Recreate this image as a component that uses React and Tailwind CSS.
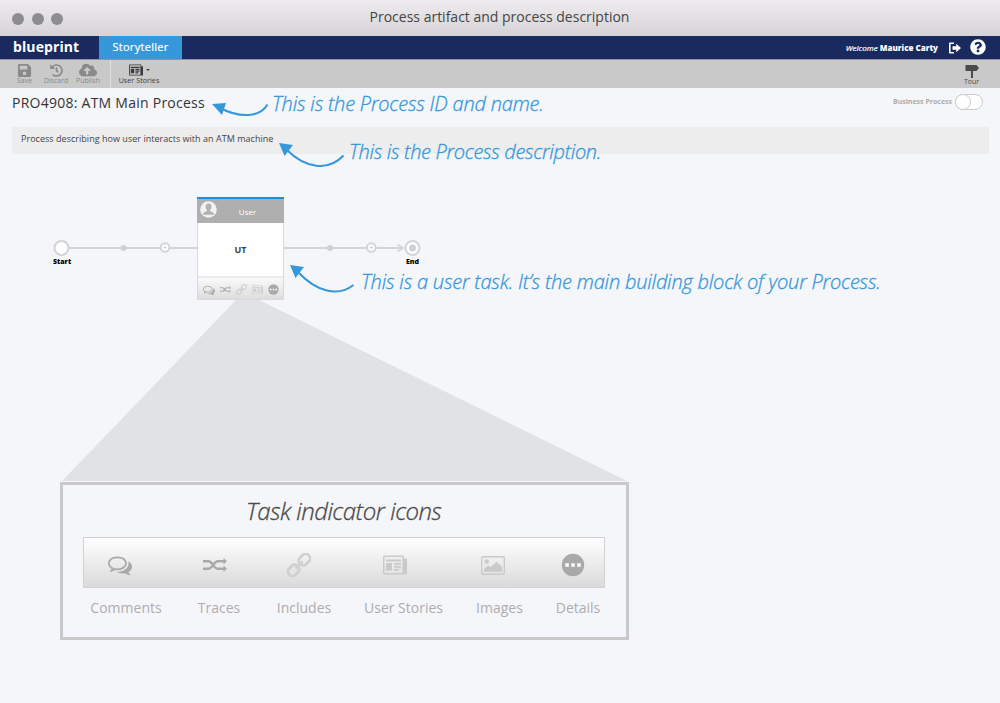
import React from "react";
import { FaSave, FaHistory, FaCloudUploadAlt, FaQuestionCircle } from "react-icons/fa";

const Comments = ({ className }) => (
  <svg className={className} viewBox="0 0 1792 1792" fill="currentColor">
    <path d="M704 384q-153 0-286 52t-211.5 141-78.5 191q0 82 53 158t149 132l97 56-35 84q34-20 62-39l44-31 53 10q78 14 153 14 153 0 286-52t211.5-141 78.5-191-78.5-191-211.5-141-286-52zm0-128q191 0 353.5 68.5t256.5 186.5 94 257-94 257-256.5 186.5-353.5 68.5q-86 0-176-16-124 88-278 128-36 9-86 16h-3q-11 0-20.5-8t-11.5-21q-1-3-1-6.5t.5-6.5 2-6l2.5-5 3.5-5.5 4-5 4.5-5 4-4.5q5-6 23-25t26-29.5 22.5-29 25-38.5 20.5-44q-124-72-195-177t-71-224q0-139 94-257t256.5-186.5 353.5-68.5zm822 1169q10 24 20.5 44t25 38.5 22.5 29 26 29.5 23 25q1 1 4 4.5t4.5 5 4 5 3.5 5.5l2.5 5 2 6 .5 6.5-1 6.5q-3 14-13 22t-22 7q-50-7-86-16-154-40-278-128-90 16-176 16-271 0-472-132 58 4 88 4 161 0 309-45t264-129q125-92 192-212t67-254q0-77-23-152 129 71 204 178t75 230q0 120-71 224.5t-195 176.5z" />
  </svg>
);

const Traces = ({ className }) => (
  <svg className={className} viewBox="0 0 24 24" fill="none" stroke="currentColor" strokeWidth="2.4">
    <path d="M0 8.2h5.500c4 0 5 7.600 9.500 7.600h6M0 15.800h5.500c4 0 5-7.600 9.500-7.600h6" />
    <path d="M20.500 5 24 8.200l-3.500 3.200zM20.500 12.600 24 15.800l-3.500 3.200z" fill="currentColor" stroke="none" />
  </svg>
);

const Includes = ({ className }) => (
  <svg className={className} viewBox="0 0 24 24" fill="none" stroke="currentColor" strokeWidth="2.700">
    <g transform="rotate(-45 12 12)">
      <rect x="-1.500" y="7.600" width="11.500" height="8.800" rx="3.200" />
      <rect x="14" y="7.600" width="11.500" height="8.800" rx="3.200" />
      <path d="M7 12h10" />
    </g>
  </svg>
);

const Stories = ({ className }) => (
  <svg className={className} viewBox="0 0 24 24" fill="currentColor">
    <path fillRule="evenodd" d="M1 2.500h19a1 1 0 0 1 1 1V5.500h2a1 1 0 0 1 1 1V20a1.500 1.500 0 0 1-1.500 1.500H1.500A1.500 1.500 0 0 1 0 20V3.500a1 1 0 0 1 1-1zM1.500 4v16h18V4zM3 6.500h15v2H3zM3 10h6v7.500H3zM11 10h7v1.800h-7zM11 13h7v1.800h-7zM11 16h5v1.800h-5z" />
  </svg>
);

const Images = ({ className }) => (
  <svg className={className} viewBox="0 0 24 24" fill="currentColor">
    <rect x=".7" y="3.700" width="22.600" height="17.600" rx="1" fill="none" stroke="currentColor" strokeWidth="1.400" />
    <circle cx="5.700" cy="8.500" r="2.300" />
    <path d="M3 18.800v-2.700l4-3.700 2.500 1.800 6-5.400 5.500 5v5z" />
  </svg>
);

const Details = ({ className }) => (
  <svg className={className} viewBox="0 0 24 24">
    <circle cx="12" cy="12" r="11.200" fill="currentColor" />
    <path d="M4.300 10.300h3.500v3.500H4.300zM10.300 10.300h3.500v3.500h-3.500zM16.200 10.300h3.500v3.500h-3.500z" fill="#fff" />
  </svg>
);

const SignOut = ({ className }) => (
  <svg className={className} viewBox="0 0 12 12" fill="currentColor">
    <path d="M5 .5v1.500H1.600v8H5v1.500H.8a.8.8 0 0 1-.8-.8V1.300A.8.8 0 0 1 .8.5z" />
    <path d="M3.500 4.300h3.700V1.700L12 6l-4.800 4.300V7.700H3.500z" />
  </svg>
);

const Signpost = ({ className }) => (
  <svg className={className} viewBox="0 0 14 14" fill="currentColor">
    <path d="M.5 1h11L14 4 11.500 7H.5zM6 7h2v7H6z" />
  </svg>
);

function ToolButton({ icon, label, className }) {
  return (
    <div className={"flex flex-col items-center text-[7px] leading-[8px] " + className}>
      <div className="flex h-[14px] items-center">{icon}</div>
      <span className="whitespace-nowrap">{label}</span>
    </div>
  );
}

function Diagram() {
  return (
    <svg className="absolute left-0 top-0 h-[703px] w-[1000px]" viewBox="0 0 1000 703" fill="none">
      <path d="M236 300h23l368 181H62z" fill="#e1e2e6" />
      <g stroke="#d3d4d9" strokeWidth="2">
        <path d="M69 248h332" />
        <circle cx="61.500" cy="248" r="7" fill="#fff" />
        <circle cx="165" cy="247.500" r="4.300" fill="#fff" />
        <circle cx="371.300" cy="247.500" r="4.300" fill="#fff" />
        <path d="M397.500 244.500l5.500 3.500-5.500 3.500" />
        <circle cx="412.500" cy="248" r="7" fill="#fff" />
      </g>
      <g fill="#cfd0d5">
        <circle cx="123.500" cy="248" r="3" />
        <circle cx="330" cy="248" r="3" />
        <circle cx="412.500" cy="248" r="3.500" />
        <path d="M163.500 247h3v1h-3zM164.500 246h1v3h-1zM369.800 247h3v1h-3zM370.800 246h1v3h-1z" />
      </g>
    </svg>
  );
}

function Arrows() {
  return (
    <svg className="pointer-events-none absolute left-0 top-0 h-[703px] w-[1000px]" viewBox="0 0 1000 703" fill="none">
      <g stroke="#3498db" strokeWidth="2">
        <path d="M219 107.500C241 119 260 117 267.500 104.500" />
        <path d="M287 150C305 168 328 172 343.500 155.500" />
        <path d="M299 273C315 290 337 298 353.500 285" />
      </g>
      <g fill="#3498db">
        <path d="M212 104l14-1-4 12z" />
        <path d="M279 143l14 2-8.500 11z" />
        <path d="M290 265l14 2-8.500 11z" />
      </g>
    </svg>
  );
}

function TaskCard() {
  return (
    <div className="absolute left-[197px] top-[197px] flex h-[103px] w-[87px] flex-col border border-t-0 border-[#d9d9db] bg-white">
      <div className="relative -mx-px flex h-[26px] items-center justify-center border-t-2 border-[#1e8fd5] bg-[#afafaf] pl-[14px] pt-[2px] text-[8px] text-white">
        <svg className="absolute left-[3px] top-[1.500px] size-[17px]" viewBox="0 0 17 17">
          <circle cx="8.500" cy="8.500" r="8.300" fill="#f2f2f2" />
          <path d="M8.500 2.500c2 0 3 1.300 3 3.200 0 1.500-.6 2.700-1.500 3.300v1c1.300.6 3.500 1 4 2.800v1H3v-1c.5-1.800 2.700-2.200 4-2.800V9C6.100 8.400 5.500 7.200 5.500 5.700c0-1.900 1-3.200 3-3.200z" fill="#b3b3b3" />
        </svg>
        User
      </div>
      <div className="flex h-[53px] items-center justify-center text-[9px] font-bold text-[#444]">UT</div>
      <div className="flex flex-1 items-center justify-between border-t-2 border-[#ebebed] bg-linear-to-b from-[#fafafa] to-[#dddddd] px-1 pl-[5px] pt-[2px] text-[#a9a9a9]">
        <Comments className="size-[12px]" />
        <Traces className="size-[11px]" />
        <Includes className="size-[11px] text-[#cfcfcf]" />
        <Stories className="size-[11px] text-[#cfcfcf]" />
        <Details className="size-[11px]" />
      </div>
    </div>
  );
}

function IndicatorPanel() {
  return (
    <section className="absolute left-[60px] top-[482px] flex h-[158px] w-[569px] flex-col border-3 border-[#c9c9c9] bg-[#f5f6fa]">
      <h2 className="mt-[9px] h-[34px] whitespace-nowrap pl-[183px] text-[24px] font-light italic leading-[34px] tracking-[-0.480px] text-[#4a4a4a] [-webkit-text-stroke:0.300px_#4a4a4a]">
        Task indicator icons
      </h2>
      <div className="ml-[20px] mt-[9px] flex h-[51px] w-[522px] items-center border border-[#d0d1d6] bg-linear-to-b from-white to-[#dadada] pl-[24px] pt-1 text-[#a9a9a9]">
        <Comments className="size-[24px]" />
        <Traces className="ml-[71px] size-[24px]" />
        <Includes className="ml-[60px] size-[24px] text-[#d0d0d0]" />
        <Stories className="ml-[72px] size-[24px] text-[#cacaca]" />
        <Images className="ml-[74px] size-[24px] text-[#cacaca]" />
        <Details className="ml-[56px] size-[24px]" />
      </div>
      <div className="ml-[20px] mt-[10px] flex text-center text-[14px] leading-5 text-[#adadad]">
        <span className="w-[86px]">Comments</span>
        <span className="w-[100px]">Traces</span>
        <span className="w-[70px]">Includes</span>
        <span className="w-[129px]">User Stories</span>
        <span className="w-[63px]">Images</span>
        <span className="w-[94px]">Details</span>
      </div>
    </section>
  );
}

export default function App() {
  return (
    <div className="relative flex h-[703px] w-[1000px] flex-col overflow-hidden bg-[#f5f6fa] font-['Open_Sans',sans-serif]">
      <header className="relative flex h-[36px] shrink-0 items-center justify-center bg-linear-to-b from-[#eeecee] to-[#d5d3d5] text-[14px] text-[#444]">
        <div className="absolute left-[12px] top-[13px] flex gap-[7.500px]">
          <i className="size-[12px] rounded-full bg-[#8d8d91]" />
          <i className="size-[12px] rounded-full bg-[#8d8d91]" />
          <i className="size-[12px] rounded-full bg-[#8d8d91]" />
        </div>
        <span className="pb-[3px] pr-px">Process artifact and process description</span>
      </header>

      <nav className="flex h-[24px] shrink-0 items-center border-b border-[#8e93a6] bg-[#1b2a5e] text-white">
        <span className="w-[99px] pb-[2px] pl-[13px] text-[14px] font-bold leading-5 tracking-[0.100px]">blueprint</span>
        <span className="flex h-[23px] w-[83px] items-center justify-center bg-[#3498db] text-[11px] tracking-[0.300px] [-webkit-text-stroke:0.200px_#fff]">Storyteller</span>
        <span className="ml-auto text-[8px]">
          <i className="[-webkit-text-stroke:0.200px_#fff]">Welcome</i> <b className="font-extrabold">Maurice Carty</b>
        </span>
        <SignOut className="ml-[11px] size-[12px]" />
        <FaQuestionCircle className="mb-[2px] ml-[9px] mr-[14px] size-[16px]" />
      </nav>

      <div className="flex h-[28px] shrink-0 bg-[#c9c9c9] pt-[3px] text-[#8a8a8a]">
        <ToolButton className="ml-[16px] w-[17px]" label="Save" icon={<FaSave className="size-[15px]" />} />
        <ToolButton className="ml-[10px] w-[26px]" label="Discard" icon={<FaHistory className="size-[13px]" />} />
        <ToolButton className="ml-[6px] w-[26px]" label="Publish" icon={<FaCloudUploadAlt className="size-[18px]" />} />
        <div className="-mt-[3px] ml-[9px] w-px bg-[#e0e0e0]" />
        <ToolButton
          className="ml-[7px] w-[42px] tracking-[0.100px] text-[#3a3a3a]"
          label="User Stories"
          icon={
            <div className="flex items-center gap-[3px]">
              <Stories className="size-[14px]" />
              <span className="border-x-[2.500px] border-t-[2.500px] border-x-transparent border-t-[#444]" />
            </div>
          }
        />
        <ToolButton className="ml-auto mr-[20px] mt-px w-[17px] text-[#4a4a4a]" label="Tour" icon={<Signpost className="size-[14px]" />} />
      </div>

      <div className="flex h-[39px] shrink-0 items-center pl-[12px] pr-[17px]">
        <h1 className="pb-[11px] text-[14px] tracking-[0.250px] text-[#333]">PRO4908: ATM Main Process</h1>
        <span className="ml-auto pb-[10px] text-[7px] font-bold text-[#adadad]">Business Process</span>
        <span className="mb-[11px] ml-[3px] flex h-[16px] w-[28px] rounded-full border border-[#cdcdcd] bg-white">
          <i className="-ml-px -mt-px size-[16px] rounded-full border border-[#cdcdcd] bg-white" />
        </span>
      </div>
      <p className="mx-[12px] flex h-[27px] w-[977px] shrink-0 items-center bg-[#ededed] pb-[3px] pl-[9px] text-[9px] tracking-[0.030px] text-[#444]">
        Process describing how user interacts with an ATM machine
      </p>

      <Diagram />
      <span className="absolute left-[53px] top-[257px] text-[7px] font-extrabold leading-[10px] text-black">Start</span>
      <span className="absolute left-[406px] top-[257px] text-[7px] font-extrabold leading-[10px] text-black">End</span>
      <TaskCard />
      <IndicatorPanel />
      <Arrows />
      <div className="whitespace-nowrap text-[20px] font-light italic leading-[28px] text-[#3498db] [-webkit-text-stroke:0.300px_#3498db]">
        <span className="absolute left-[272px] top-[90px] tracking-[-0.200px]">This is the Process ID and name.</span>
        <span className="absolute left-[349px] top-[138px] tracking-[-0.310px]">This is the Process description.</span>
        <span className="absolute left-[361px] top-[268px] tracking-[-0.200px]">This is a user task. It’s the main building block of your Process.</span>
      </div>
    </div>
  );
}
